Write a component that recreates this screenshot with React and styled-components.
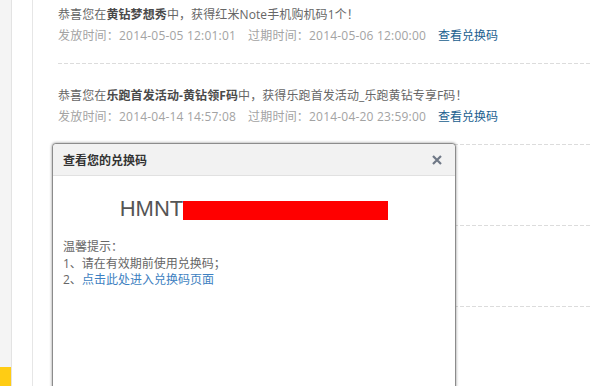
import React from "react";
import styled, { createGlobalStyle } from "styled-components";

const GlobalStyle = createGlobalStyle`
  html, body {
    margin: 0;
    padding: 0;
    background: #fff;
  }
  body {
    font-family: "Open Sans", "Noto Sans CJK SC", sans-serif;
    font-size: 12px;
    color: #666;
  }
`;

const codes = [
  {
    before: "恭喜您在",
    event: "黄钻梦想秀",
    after: "中，获得红米Note手机购机码1个！",
    start: "2014-05-05 12:01:01",
    end: "2014-05-06 12:00:00",
  },
  {
    before: "恭喜您在",
    event: "乐跑首发活动-黄钻领F码",
    after: "中，获得乐跑首发活动_乐跑黄钻专享F码！",
    start: "2014-04-14 14:57:08",
    end: "2014-04-20 23:59:00",
  },
  null,
  null,
  null,
];

export default function App() {
  return (
    <>
      <GlobalStyle />
      <ScPage>
        <ScSidebar>
          <ScSideMark />
        </ScSidebar>
        <ScMain>
          <ScList>
            {codes.map((data, i) => (
              <ScItem key={i}>
                {data && (
                  <>
                    <ScTitle>
                      {data.before}
                      <b>{data.event}</b>
                      {data.after}
                    </ScTitle>
                    <ScMeta>
                      <span>发放时间：{data.start}</span>
                      <span>过期时间：{data.end}</span>
                      <a href="#">查看兑换码</a>
                    </ScMeta>
                  </>
                )}
              </ScItem>
            ))}
          </ScList>
        </ScMain>
        <CodeDialog />
      </ScPage>
    </>
  );
}

const CodeDialog = () => {
  return (
    <ScDialog>
      <ScDialogHead>
        <span>查看您的兑换码</span>
        <ScClose aria-label="close">
          <svg width="10" height="10" viewBox="0 0 10 10">
            <path d="M1 1L9 9M9 1L1 9" stroke="#6f7886" strokeWidth="2.2" />
          </svg>
        </ScClose>
      </ScDialogHead>
      <ScDialogBody>
        <ScCode>
          HMNT
          <ScMask />
        </ScCode>
        <ScTips>
          <div>温馨提示：</div>
          <div>1、请在有效期前使用兑换码；</div>
          <div>
            2、<a href="#">点击此处进入兑换码页面</a>
          </div>
        </ScTips>
      </ScDialogBody>
    </ScDialog>
  );
};

const ScPage = styled.div`
  position: relative;
  display: flex;
  height: 100vh;
  overflow: hidden;
`;

const ScSidebar = styled.div`
  display: flex;
  flex-direction: column;
  justify-content: flex-end;
  width: 11px;
  flex: none;
  background-color: #f4f4f4;
  border-right: 1px solid #e3e3e3;
`;

const ScSideMark = styled.div`
  height: 19px;
  background-color: #ffcc14;
`;

const ScMain = styled.div`
  flex: 1;
  margin-left: 20px;
  border-left: 1px solid #e6e6e6;
  padding-left: 25px;
`;

const ScList = styled.ul`
  list-style: none;
  margin: -17px 0 0;
  padding: 0;
`;

const ScItem = styled.li`
  min-height: 42px;
  padding: 21px 0 18px;
  background-image: linear-gradient(to right, #dcdcdc 4px, transparent 4px);
  background-size: 6px 1px;
  background-repeat: repeat-x;
  background-position: left bottom;
`;

const ScTitle = styled.div`
  line-height: 21px;
  letter-spacing: 0.1px;
  color: #666;
  b {
    color: #4a4a4a;
    font-weight: bold;
  }
`;

const ScMeta = styled.div`
  line-height: 21px;
  color: #a3a3a3;
  span {
    letter-spacing: 0.2px;
    margin-right: 12px;
  }
  a {
    color: #21608f;
    text-decoration: none;
  }
`;

const ScDialog = styled.div`
  position: absolute;
  left: 52px;
  top: 143px;
  width: 402px;
  height: 300px;
  background-color: #fff;
  border: 1px solid #8c8c8c;
  border-radius: 4px 4px 0 0;
  box-shadow: 0 0 3px rgba(0, 0, 0, 0.45);
`;

const ScDialogHead = styled.div`
  display: flex;
  align-items: center;
  justify-content: space-between;
  height: 31px;
  padding: 0 13px 0 10px;
  background-color: #f2f2f2;
  border-bottom: 1px solid #e1e1e1;
  border-radius: 4px 4px 0 0;
  font-weight: bold;
  color: #333;
`;

const ScClose = styled.span`
  display: flex;
  align-items: center;
  cursor: pointer;
`;

const ScDialogBody = styled.div`
  padding: 20px 10px 0;
`;

const ScCode = styled.div`
  display: flex;
  justify-content: center;
  align-items: center;
  height: 26px;
  font-family: "Liberation Sans", Arial, sans-serif;
  font-size: 22px;
  color: #555;
`;

const ScMask = styled.span`
  display: inline-block;
  width: 205px;
  height: 19px;
  margin-top: 2px;
  background-color: #ff0000;
`;

const ScTips = styled.div`
  margin-top: 17px;
  line-height: 16.5px;
  color: #666;
  a {
    color: #3d7fc1;
    text-decoration: none;
  }
`;
